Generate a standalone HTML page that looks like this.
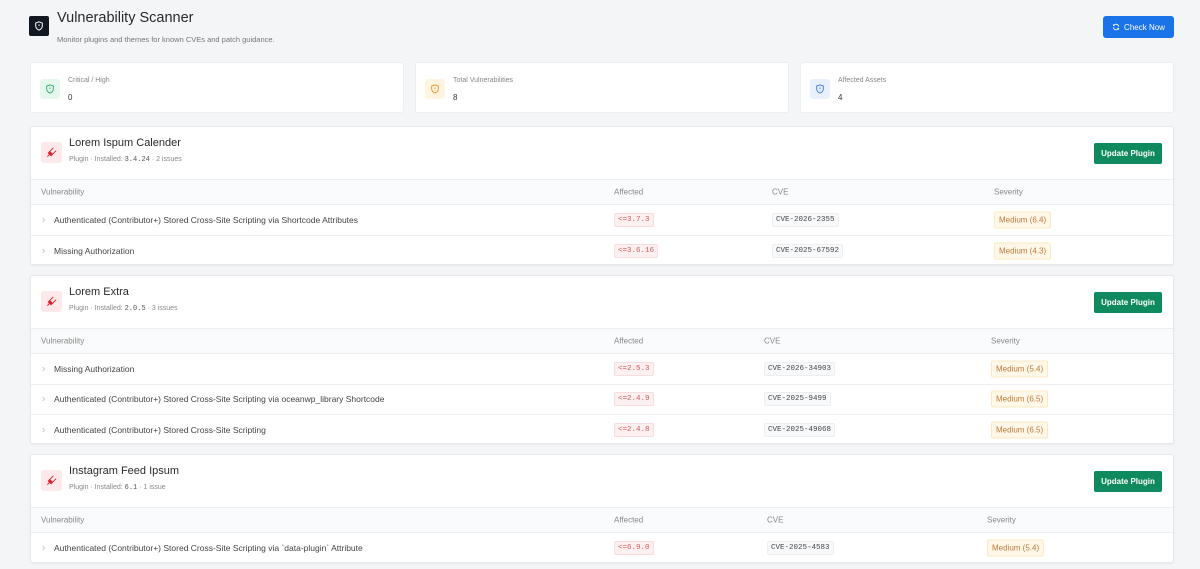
<!DOCTYPE html>
<html><head><meta charset="utf-8"><style>
*{box-sizing:border-box;margin:0;padding:0}
body{width:1200px;height:569px;overflow:hidden;background:#f4f5f7;font-family:"Liberation Sans",sans-serif;color:#1f2328;position:relative}
.abs{position:absolute}
.logo{left:29px;top:16px;width:20px;height:20px;background:#111820;border-radius:2px;display:flex;align-items:center;justify-content:center}
.title{left:57px;top:10px;font-size:14.5px;color:#2a2a2a}
.sub{left:57px;top:35px;font-size:7.5px;color:#777}
.btnb{left:1103px;top:16px;width:71px;height:22px;background:#1a73e8;border-radius:3px;color:#fff;font-size:8px;display:flex;align-items:center;justify-content:center;gap:4px}
.stat{top:62px;height:51px;width:374px;background:#fff;border:1px solid #eceef1;border-radius:3px}
.sic{position:absolute;left:9px;top:16px;width:20px;height:20px;border-radius:3px;display:flex;align-items:center;justify-content:center}
.sl{position:absolute;left:37px;top:14px;font-size:7px;color:#888}
.sv{position:absolute;left:37px;top:30px;font-size:8px;color:#333}
.card{left:30px;width:1144px;background:#fff;border:1px solid #e6e8eb;border-radius:3px;overflow:hidden;box-shadow:0 1px 2px rgba(0,0,0,.05)}
.ch{height:53px;position:relative;border-bottom:1px solid #eceef1}
.pic{position:absolute;left:10px;top:15px;width:21px;height:21px;background:#fde8ea;border-radius:3px;display:flex;align-items:center;justify-content:center}
.pt{position:absolute;left:38px;top:10px;font-size:11px;color:#2a2a2a}
.ps{position:absolute;left:38px;top:29px;font-size:7px;color:#888}
.ps code{font-family:"Liberation Mono",monospace;font-size:7px;color:#555}
.upd{position:absolute;right:11px;top:16px;width:68px;height:21px;background:#0f8a5f;border-radius:2px;color:#fff;font-size:8px;font-weight:bold;display:flex;align-items:center;justify-content:center}
.row{position:relative;height:30.5px;border-bottom:1px solid #eceef1;font-size:8.5px;color:#444}
.row:last-child{border-bottom:none}
.th{height:25px;background:#fafbfc;color:#888;font-size:8px}
.row span{position:absolute;top:50%;transform:translateY(-50%);white-space:nowrap}
.aff{font-family:"Liberation Mono",monospace;font-size:7.5px;color:#d05a5a;background:#fdf0f1;border:1px solid #f9dde0;border-radius:2px;padding:2px 3px}
.cve{font-family:"Liberation Mono",monospace;font-size:7.5px;color:#444;background:#f8f9fa;border:1px solid #eceef1;border-radius:2px;padding:2px 3px}
.sev{font-size:8px;color:#c0793a;background:#fff8e8;border:1px solid #fbe9c2;border-radius:2px;padding:3px 4px}
.chev{color:#bbb;font-size:10px}
</style></head><body>
<div class="abs logo"><svg width="10" height="10" viewBox="0 0 24 24" fill="none" stroke="#fff" stroke-width="2.4"><path d="M12 2l8 3v6c0 5-3.5 9-8 11-4.5-2-8-6-8-11V5z"/><path d="M12 8v4M12 15v.5"/></svg></div>
<div class="abs title">Vulnerability Scanner</div>
<div class="abs sub">Monitor plugins and themes for known CVEs and patch guidance.</div>
<div class="abs btnb"><svg width="8" height="8" viewBox="0 0 24 24" fill="none" stroke="#fff" stroke-width="2.5"><path d="M20 11a8 8 0 0 0-14.5-4M4 4v4h4M4 13a8 8 0 0 0 14.5 4M20 20v-4h-4"/></svg>Check Now</div>

<div class="abs stat" style="left:30px"><div class="sic" style="background:#e6f7ee"><svg width="10" height="10" viewBox="0 0 24 24" fill="none" stroke="#17a45a" stroke-width="2"><path d="M12 2l8 3v6c0 5-3.5 9-8 11-4.5-2-8-6-8-11V5z"/><path d="M12 8v4M12 15v.5"/></svg></div><div class="sl">Critical / High</div><div class="sv">0</div></div>
<div class="abs stat" style="left:415px"><div class="sic" style="background:#fff4e0"><svg width="10" height="10" viewBox="0 0 24 24" fill="none" stroke="#e08a1e" stroke-width="2"><path d="M12 2l8 3v6c0 5-3.5 9-8 11-4.5-2-8-6-8-11V5z"/><path d="M12 8v4M12 15v.5"/></svg></div><div class="sl">Total Vulnerabilities</div><div class="sv">8</div></div>
<div class="abs stat" style="left:800px"><div class="sic" style="background:#e8f0fd"><svg width="10" height="10" viewBox="0 0 24 24" fill="none" stroke="#2f6fe0" stroke-width="2"><path d="M12 2l8 3v6c0 5-3.5 9-8 11-4.5-2-8-6-8-11V5z"/><path d="M12 8v4M12 15v.5"/></svg></div><div class="sl">Affected Assets</div><div class="sv">4</div></div>

<div class="abs card" style="top:126px;height:139px">
<div class="ch"><div class="pic"><svg width="11" height="11" viewBox="0 0 24 24" fill="#e0202e" stroke="#e0202e" stroke-width="2"><path d="M3 21l5-5M14 4l-6 6 6 6 6-6M16 2l-2 2M22 8l-2 2" fill="none"/><path d="M8 10l6 6-3 3-6-6z"/></svg></div><div class="pt">Lorem Ispum Calender</div><div class="ps">Plugin · Installed: <code>3.4.24</code> · 2 issues</div><div class="upd">Update Plugin</div></div>
<div class="row th"><span style="left:10px">Vulnerability</span><span style="left:583px">Affected</span><span style="left:741px">CVE</span><span style="left:963px">Severity</span></div>
<div class="row"><span class="chev" style="left:11px">›</span><span style="left:23px">Authenticated (Contributor+) Stored Cross-Site Scripting via Shortcode Attributes</span><span class="aff" style="left:583px">&lt;=3.7.3</span><span class="cve" style="left:741px">CVE-2026-2355</span><span class="sev" style="left:963px">Medium (6.4)</span></div>
<div class="row"><span class="chev" style="left:11px">›</span><span style="left:23px">Missing Authorization</span><span class="aff" style="left:583px">&lt;=3.6.16</span><span class="cve" style="left:741px">CVE-2025-67592</span><span class="sev" style="left:963px">Medium (4.3)</span></div>
</div>

<div class="abs card" style="top:275px;height:169px">
<div class="ch"><div class="pic"><svg width="11" height="11" viewBox="0 0 24 24" fill="#e0202e" stroke="#e0202e" stroke-width="2"><path d="M3 21l5-5M14 4l-6 6 6 6 6-6M16 2l-2 2M22 8l-2 2" fill="none"/><path d="M8 10l6 6-3 3-6-6z"/></svg></div><div class="pt">Lorem Extra</div><div class="ps">Plugin · Installed: <code>2.0.5</code> · 3 issues</div><div class="upd">Update Plugin</div></div>
<div class="row th"><span style="left:10px">Vulnerability</span><span style="left:583px">Affected</span><span style="left:733px">CVE</span><span style="left:960px">Severity</span></div>
<div class="row"><span class="chev" style="left:11px">›</span><span style="left:23px">Missing Authorization</span><span class="aff" style="left:583px">&lt;=2.5.3</span><span class="cve" style="left:733px">CVE-2026-34903</span><span class="sev" style="left:960px">Medium (5.4)</span></div>
<div class="row"><span class="chev" style="left:11px">›</span><span style="left:23px">Authenticated (Contributor+) Stored Cross-Site Scripting via oceanwp_library Shortcode</span><span class="aff" style="left:583px">&lt;=2.4.9</span><span class="cve" style="left:733px">CVE-2025-9499</span><span class="sev" style="left:960px">Medium (6.5)</span></div>
<div class="row"><span class="chev" style="left:11px">›</span><span style="left:23px">Authenticated (Contributor+) Stored Cross-Site Scripting</span><span class="aff" style="left:583px">&lt;=2.4.8</span><span class="cve" style="left:733px">CVE-2025-49068</span><span class="sev" style="left:960px">Medium (6.5)</span></div>
</div>

<div class="abs card" style="top:454px;height:109px">
<div class="ch"><div class="pic"><svg width="11" height="11" viewBox="0 0 24 24" fill="#e0202e" stroke="#e0202e" stroke-width="2"><path d="M3 21l5-5M14 4l-6 6 6 6 6-6M16 2l-2 2M22 8l-2 2" fill="none"/><path d="M8 10l6 6-3 3-6-6z"/></svg></div><div class="pt">Instagram Feed Ipsum</div><div class="ps">Plugin · Installed: <code>6.1</code> · 1 issue</div><div class="upd">Update Plugin</div></div>
<div class="row th"><span style="left:10px">Vulnerability</span><span style="left:583px">Affected</span><span style="left:736px">CVE</span><span style="left:956px">Severity</span></div>
<div class="row"><span class="chev" style="left:11px">›</span><span style="left:23px">Authenticated (Contributor+) Stored Cross-Site Scripting via `data-plugin` Attribute</span><span class="aff" style="left:583px">&lt;=6.9.0</span><span class="cve" style="left:736px">CVE-2025-4583</span><span class="sev" style="left:956px">Medium (5.4)</span></div>
</div>
</body></html>
